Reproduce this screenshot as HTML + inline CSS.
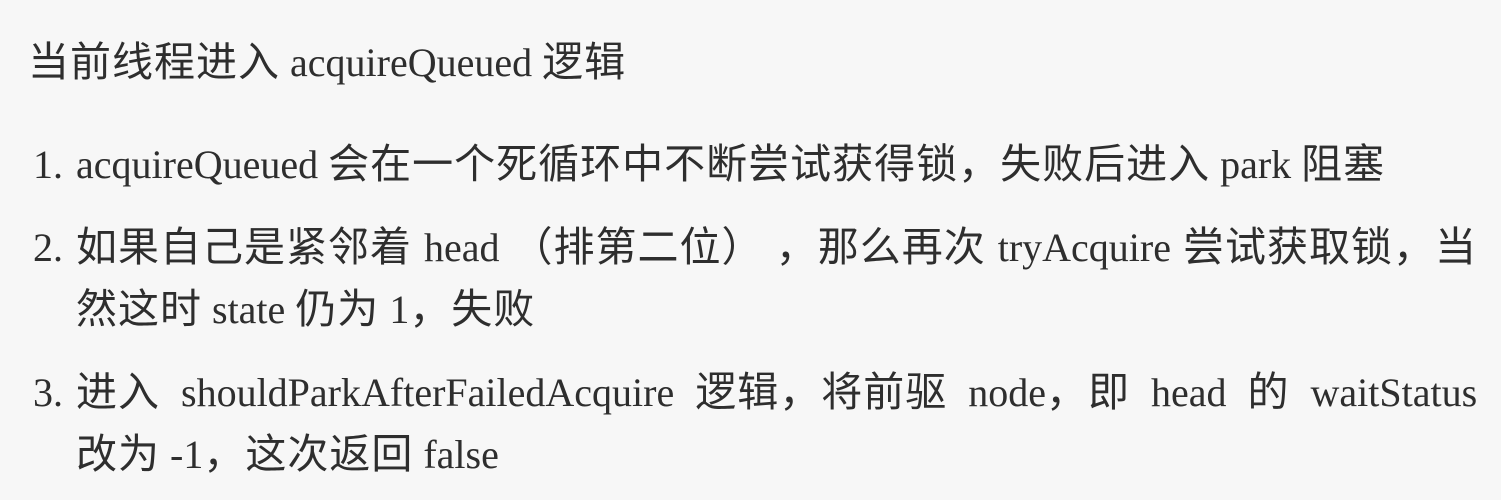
<!DOCTYPE html>
<html><head><meta charset="utf-8"><style>
html,body{margin:0;padding:0;}
body{width:1501px;height:500px;background:#f7f7f7;position:relative;overflow:hidden;
font-family:"Liberation Serif","Noto Sans CJK SC",serif;color:#2e2e2e;}
.l,.n{position:absolute;white-space:nowrap;font-size:40px;line-height:50px;}
.c{font-family:"Noto Sans CJK SC",sans-serif;font-size:41px;letter-spacing:1px;}
</style></head><body>
<div class="l" style="left:28px;top:33px"><span class="c">当前线程进入</span> acquireQueued <span class="c">逻辑</span></div>
<div class="n" style="left:33px;top:140px">1.</div>
<div class="l" style="left:76px;top:135px">acquireQueued <span class="c">会在一个死循环中不断尝试获得锁，失败后进入</span> park <span class="c">阻塞</span></div>
<div class="n" style="left:33px;top:223px">2.</div>
<div class="l" style="left:76px;top:218px;word-spacing:2px"><span class="c">如果自己是紧邻着</span> head <span class="c">（排第二位） ，那么再次</span> tryAcquire <span class="c">尝试获取锁，当</span></div>
<div class="l" style="left:76px;top:280px"><span class="c">然这时</span> state <span class="c">仍为</span> 1<span class="c">，失败</span></div>
<div class="n" style="left:33px;top:368px">3.</div>
<div class="l" style="left:76px;top:363px;word-spacing:11px"><span class="c">进入</span> shouldParkAfterFailedAcquire <span class="c">逻辑，将前驱</span> node<span class="c">，即</span> head <span class="c">的</span> waitStatus</div>
<div class="l" style="left:76px;top:425px"><span class="c">改为</span> -1<span class="c">，这次返回</span> false</div>
</body></html>
